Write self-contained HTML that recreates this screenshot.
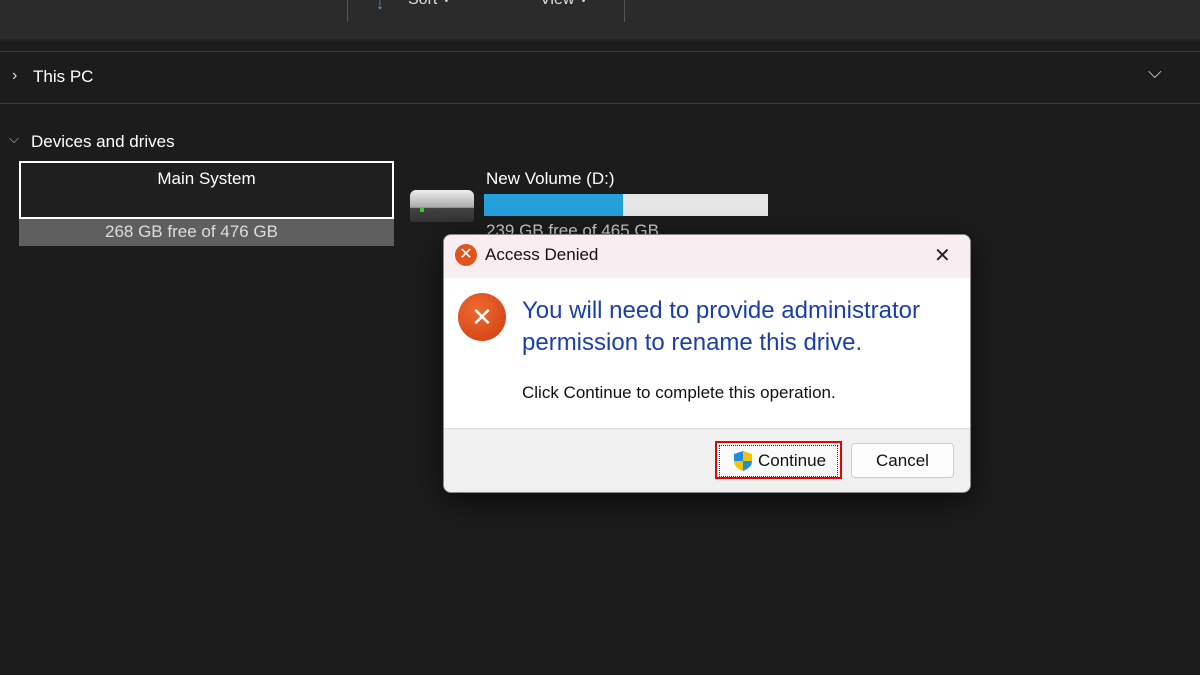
<!DOCTYPE html><html><head><style>
body{margin:0;width:1200px;height:675px;background:#1c1c1c;overflow:hidden;position:relative;font-family:"Liberation Sans",sans-serif;color:#fff}
.a{position:absolute}
</style></head><body>
<div class="a" style="left:0;top:0;width:1200px;height:39px;background:#2b2b2b;border-bottom:2px solid #232323"></div>
<div class="a" style="left:347px;top:0;width:1px;height:22px;background:#555"></div>
<div class="a" style="left:624px;top:0;width:1px;height:22px;background:#555"></div>
<div class="a" style="left:408px;top:-9px;font-size:16px;color:#ddd">Sort ˅</div>
<div class="a" style="left:540px;top:-9px;font-size:16px;color:#ddd">View ˅</div>
<div class="a" style="left:650px;top:-12px;font-size:18px;color:#ddd;font-weight:bold">···</div>
<div class="a" style="left:376px;top:-4px;font-size:16px;color:#4aa3e0">↓</div>
<div class="a" style="left:0;top:51px;width:1200px;height:1px;background:#3a3a3a"></div>
<div class="a" style="left:0;top:103px;width:1200px;height:1px;background:#3a3a3a"></div>
<div class="a" style="left:12px;top:67px;font-size:16px;color:#ddd">›</div>
<div class="a" style="left:33px;top:67px;font-size:17px">This PC</div>
<div class="a" style="left:1148px;top:62px;font-size:18px;color:#ddd">⌵</div>
<div class="a" style="left:9px;top:131px;font-size:13px;color:#bbb">⌵</div>
<div class="a" style="left:31px;top:132px;font-size:17px">Devices and drives</div>
<div class="a" style="left:19px;top:217px;width:375px;height:29px;background:#5f5f5f"></div>
<div class="a" style="left:19px;top:161px;width:371px;height:54px;border:2px solid #fff;background:#1f1f1f"></div>
<div class="a" style="left:19px;top:169px;width:375px;text-align:center;font-size:17px">Main System</div>
<div class="a" style="left:105px;top:222px;font-size:17px;color:#ddd">268 GB free of 476 GB</div>
<div class="a" style="left:410px;top:190px;width:64px;height:32px;border-radius:6px 6px 3px 3px;background:linear-gradient(#eee,#aaa 55%,#444 56%,#333)"></div>
<div class="a" style="left:420px;top:208px;width:4px;height:4px;background:#3c3"></div>
<div class="a" style="left:486px;top:169px;font-size:17px">New Volume (D:)</div>
<div class="a" style="left:484px;top:194px;width:284px;height:22px;background:#e6e6e6"></div>
<div class="a" style="left:484px;top:194px;width:139px;height:22px;background:#26a0da"></div>
<div class="a" style="left:486px;top:221px;font-size:17px;color:#ccc">239 GB free of 465 GB</div>
<div class="a" style="left:443px;top:234px;width:526px;height:257px;border:1px solid #888;border-radius:8px;overflow:hidden;background:#fff;box-shadow:0 8px 30px rgba(0,0,0,.6)">
 <div style="height:43px;background:#f8eef1;position:relative">
  <div class="a" style="left:11px;top:9px;width:22px;height:22px;border-radius:50%;background:#e0541f;color:#fff;text-align:center;line-height:22px;font-size:16px">✕</div>
  <div class="a" style="left:41px;top:10px;font-size:17px;color:#111">Access Denied</div>
  <div class="a" style="left:490px;top:8px;font-size:20px;color:#222">✕</div>
 </div>
 <div class="a" style="left:14px;top:58px;width:48px;height:48px;border-radius:50%;background:radial-gradient(circle at 40% 35%,#f06a30,#cc3d10);color:#fff;text-align:center;line-height:48px;font-size:26px">✕</div>
 <div class="a" style="left:78px;top:60px;font-size:24px;line-height:32px;color:#1a3fa8">You will need to provide administrator<br>permission to rename this drive.</div>
 <div class="a" style="left:78px;top:148px;font-size:17px;color:#111">Click Continue to complete this operation.</div>
 <div class="a" style="left:0;top:193px;width:526px;height:64px;background:#f0f0f0;border-top:1px solid #ddd"></div>
 <div class="a" style="left:271px;top:206px;width:127px;height:38px;border:2px solid #e00;box-sizing:border-box;background:#fff"><div style="margin:2px;border:1px dotted #333;height:30px;background:#fbfbfb;font-size:17px;color:#111;line-height:30px;padding-left:38px;position:relative"><svg style="position:absolute;left:12px;top:4px" width="22" height="22" viewBox="0 0 22 22"><path d="M11 1L20 4V11H11Z" fill="#f5c400"/><path d="M11 1L2 4V11H11Z" fill="#1f8ee0"/><path d="M2 11H11V21C6 19 2 16 2 11Z" fill="#f5c400"/><path d="M11 11H20C20 16 16 19 11 21Z" fill="#1f8ee0"/></svg>Continue</div></div>
 <div class="a" style="left:407px;top:208px;width:101px;height:33px;border:1px solid #ccc;border-radius:4px;background:#fdfdfd;text-align:center;line-height:33px;font-size:17px;color:#111">Cancel</div>
</div>
</body></html>
